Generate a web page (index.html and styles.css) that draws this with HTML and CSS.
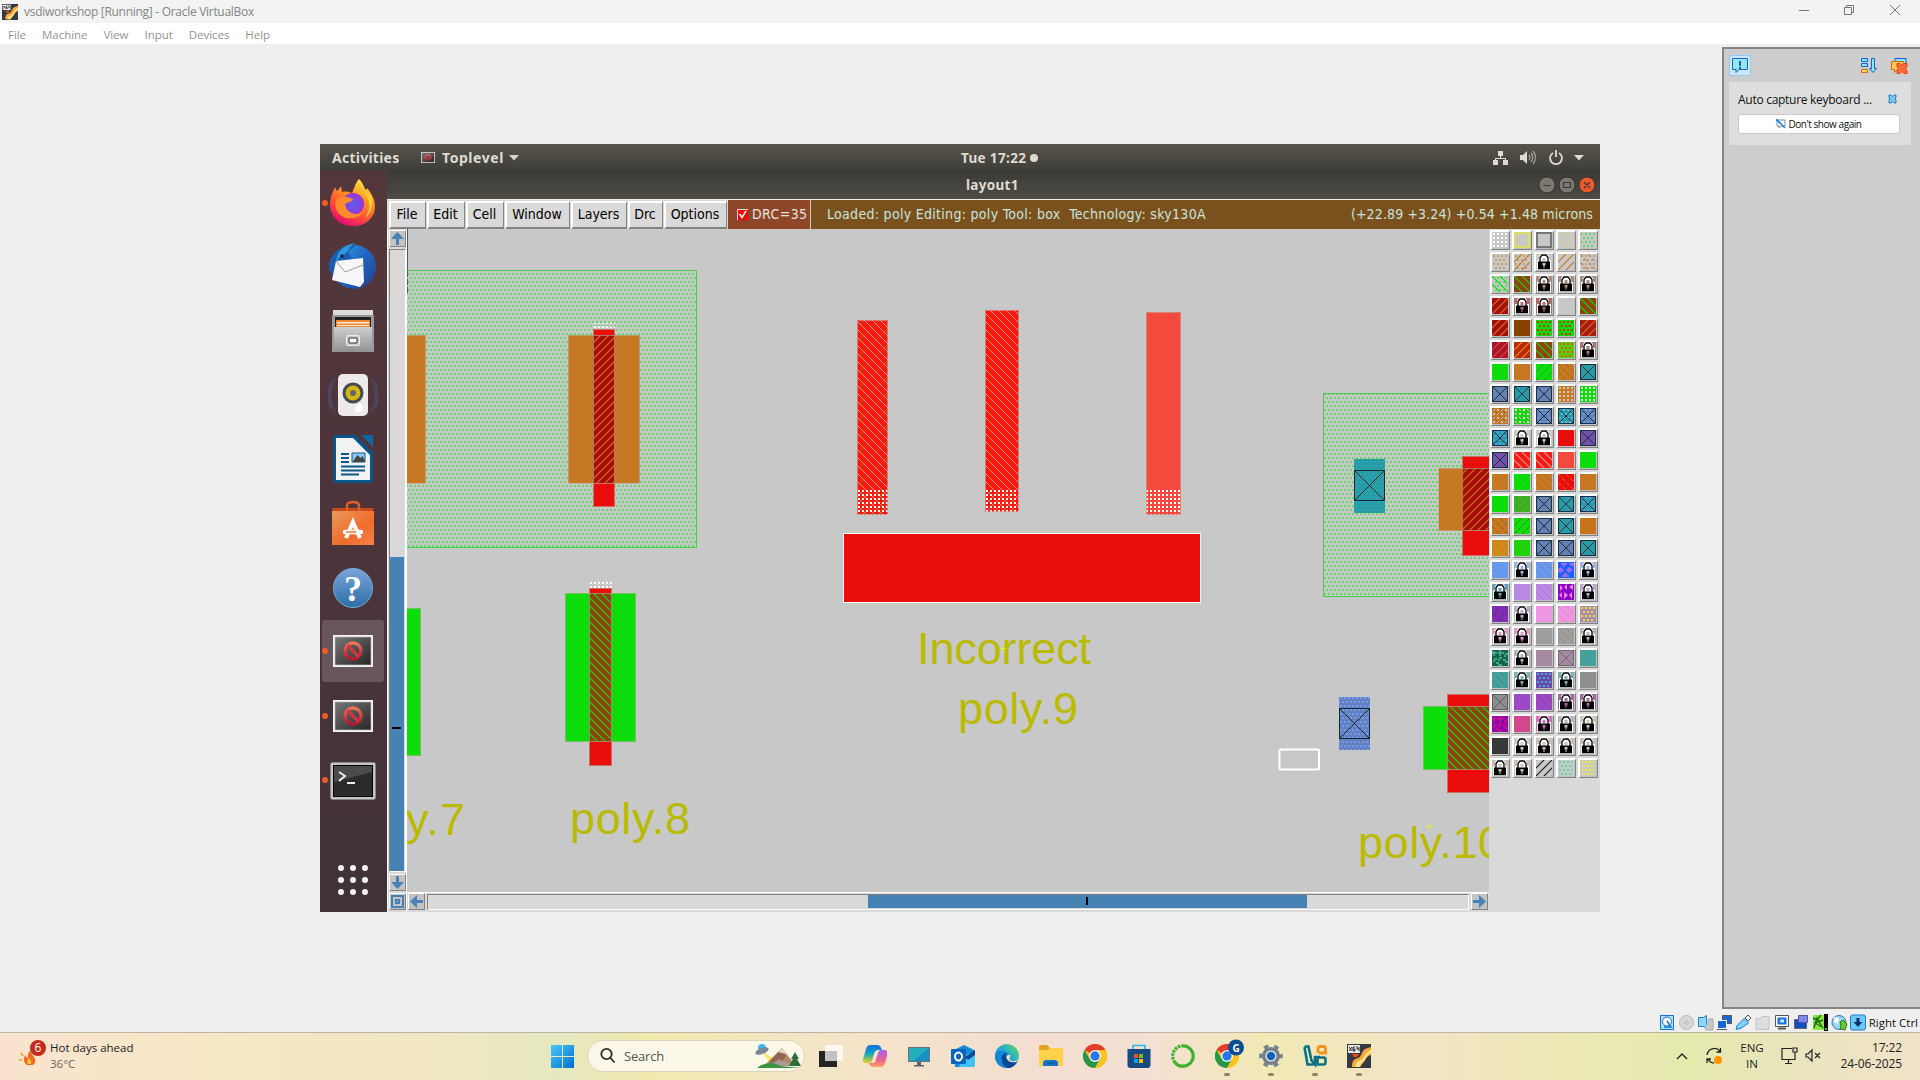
FILE: index.html
```html
<!DOCTYPE html>
<html lang="en">
<head>
<meta charset="utf-8">
<title>vsdiworkshop [Running] - Oracle VirtualBox</title>
<link rel="stylesheet" href="styles.css">
</head>
<body>
<svg class="defs" width="0" height="0" aria-hidden="true">
  <defs>
    <linearGradient id="gFox" x1="0.8" y1="0" x2="0.3" y2="1"><stop offset="0" stop-color="#fff44f"/><stop offset=".35" stop-color="#ff9a1f"/><stop offset=".7" stop-color="#ff4a3a"/><stop offset="1" stop-color="#e0067a"/></linearGradient>
    <radialGradient id="gOrb"><stop offset="0" stop-color="#5b5ff0"/><stop offset="1" stop-color="#9a35d6"/></radialGradient>
    <linearGradient id="gBird" x1="0" y1="0" x2="1" y2="1"><stop offset="0" stop-color="#3aa6e8"/><stop offset=".5" stop-color="#1d66c2"/><stop offset="1" stop-color="#263c8c"/></linearGradient>
    <linearGradient id="gSteel" x1="0" y1="0" x2="0" y2="1"><stop offset="0" stop-color="#cfcfcf"/><stop offset="1" stop-color="#919191"/></linearGradient>
    <linearGradient id="gBag" x1="0" y1="0" x2="1" y2="1"><stop offset="0" stop-color="#e8995a"/><stop offset=".6" stop-color="#f06c2c"/><stop offset="1" stop-color="#f5814a"/></linearGradient>
    <linearGradient id="gHelp" x1="0" y1="0" x2="0" y2="1"><stop offset="0" stop-color="#7ba3dc"/><stop offset="1" stop-color="#2b6fa5"/></linearGradient>
    <linearGradient id="gDark" x1="0" y1="0" x2="1" y2="1"><stop offset="0" stop-color="#777"/><stop offset="1" stop-color="#262626"/></linearGradient>
    <linearGradient id="gNo" x1="0" y1="0" x2="0" y2="1"><stop offset="0" stop-color="#ef7259"/><stop offset="1" stop-color="#b3152f"/></linearGradient>
    <linearGradient id="gWin" x1="0" y1="0" x2="1" y2="1"><stop offset="0" stop-color="#4cc8fb"/><stop offset="1" stop-color="#0070cf"/></linearGradient>
    <linearGradient id="gEdge" x1="0" y1="1" x2="1" y2="0"><stop offset="0" stop-color="#0f5fb8"/><stop offset=".5" stop-color="#22a5dc"/><stop offset="1" stop-color="#66e05a"/></linearGradient>
    <linearGradient id="gCopA" x1="0" y1="0" x2="0" y2="1"><stop offset="0" stop-color="#0b6fe8"/><stop offset=".5" stop-color="#19a7b8"/><stop offset="1" stop-color="#e9d51c"/></linearGradient>
    <linearGradient id="gCopB" x1="0" y1="0" x2="0" y2="1"><stop offset="0" stop-color="#a561f0"/><stop offset=".6" stop-color="#f0608e"/><stop offset="1" stop-color="#ffa45b"/></linearGradient>
    <pattern id="pWell" width="4" height="8" patternUnits="userSpaceOnUse"><path d="M0 1h2v2H0zM2 5h2v2H2z" fill="#5fd866"/></pattern>
    <pattern id="pDots" width="4" height="4" patternUnits="userSpaceOnUse"><path d="M2 2h2v2H2z" fill="#fff"/></pattern>
    <pattern id="pBlue" width="4" height="8" patternUnits="userSpaceOnUse"><path d="M0 1h2v2H0zM2 5h2v2H2z" fill="#6a9cf4"/></pattern>
    <pattern id="pTeal" width="4" height="8" patternUnits="userSpaceOnUse"><path d="M0 1h2v2H0zM2 5h2v2H2z" fill="#2aa2bc"/></pattern>
    <pattern id="pOrange" width="8" height="8" patternUnits="userSpaceOnUse"><path d="M-1 9L9 -1M-1 1L1 -1M7 9L9 7" stroke="#c87820" stroke-width="1.2"/></pattern>
    <pattern id="pGreen" width="8" height="8" patternUnits="userSpaceOnUse"><path d="M-1 -1L9 9M7 -1L9 1M-1 7L1 9" stroke="#0be00b" stroke-width="1.2"/></pattern>
    <pattern id="pPink" width="8" height="8" patternUnits="userSpaceOnUse"><path d="M-1 -1L9 9M7 -1L9 1M-1 7L1 9" stroke="#c99aa8" stroke-width=".95"/></pattern>
    <pattern id="pRust" width="16" height="16" patternUnits="userSpaceOnUse"><path d="M0 16L16 0" stroke="#c84a08" stroke-width="1"/></pattern>
    <symbol id="iChrome" viewBox="0 0 24 24"><circle cx="12" cy="12" r="12" fill="#fcc31e"/><path d="M12 12L1.6 6A12 12 0 0 1 22.4 6z" fill="#e33b2e"/><path d="M1.6 6A12 12 0 0 0 12 24L17.2 15 12 12 6.8 15z" fill="#24964a"/><path d="M12 6h10.4A12 12 0 0 1 12 24L17.2 15z" fill="#fcc31e"/><circle cx="12" cy="12" r="5.9" fill="#fff"/><circle cx="12" cy="12" r="4.7" fill="#2a78ea"/></symbol>
    <symbol id="iVm" viewBox="0 0 24 24"><rect width="24" height="24" fill="#353944"/><path d="M5 23c0-5 1-8 6-9 4-1 3-6 7-9l6-2v8c-5 1-5 5-8 8l-3 4z" fill="#f9a83a"/><path d="M8 23c1-4 2-6 6-7 4-2 3-7 10-10v3c-5 2-5 7-8 9-2 2-3 3-3 5z" fill="#fde08a"/><path d="M5 10h7l-2 3H7z" fill="#e8500e"/><rect x="1" y="1" width="12" height="8" rx="1" fill="#eee"/><path d="M2 3l3 4M5 3L2 7M8 3H6v4h2V5H6M10 2v3h2M12 3v4" stroke="#222" fill="none"/></symbol>
    <symbol id="iNo" viewBox="0 0 40 32"><rect width="40" height="32" fill="#f4f4f4"/><rect x="2" y="2" width="36" height="28" fill="url(#gDark)" stroke="#b9b9b9" stroke-width=".7"/><circle cx="20" cy="16" r="8" fill="none" stroke="url(#gNo)" stroke-width="3.4"/><path d="M14.5 10.5l11 11" stroke="#cf3540" stroke-width="3.2"/></symbol>
    <symbol id="iUp" viewBox="0 0 13 13"><path d="M6.500 0L13 7H8v6H5V7H0z" fill="#4682b4"/></symbol>
  </defs>
</svg>

<header class="titlebar">
  <svg class="app-icon" width="16" height="20"><use href="#iVm" width="16" height="16" y="2"/></svg>
  <span class="app-title">vsdiworkshop [Running] - Oracle VirtualBox</span>
  <svg class="caption" width="102" height="12" fill="none" stroke="#777"><path d="M0 6.500h10M45.500 3.500h7v7h-7zM47.500 3V1.500h7v7H53M91 1l10 10M101 1L91 11"/></svg>
</header>
<nav class="menubar"><span>File</span><span>Machine</span><span>View</span><span>Input</span><span>Devices</span><span>Help</span></nav>

<main class="stage">
  <section class="guest">
    <div class="topbar">
      <span class="activities">Activities</span>
      <svg class="tl-icon" width="14" height="11"><use href="#iNo" width="14" height="11"/></svg>
      <span class="toplevel">Toplevel</span>
      <svg width="10" height="6"><path d="M0 0h10L5 5.500z" fill="#d8d5cc"/></svg>
      <span class="clock">Tue 17:22<i></i></span>
      <svg class="tray" width="94" height="18" fill="#dfdbd2"><path d="M5 2h5v5H5zM0 11h5v5H0zM10 11h5v5h-5zM7 7h1v2h5v2h-1v-1H3v1H2V9h5zM27 6h3l4-4v13l-4-4h-3z"/><path d="M36 6q2 2.500 0 5M38 4q3.500 4.500 0 9M40 2q5 6.500 0 13" fill="none" stroke="#a5a299" stroke-width="1.300"/><path d="M60 4a6 6 0 1 0 6 0M63 1v7" fill="none" stroke="#dfdbd2" stroke-width="1.800"/><path d="M81 6h10l-5 5.500z"/></svg>
    </div>
    <div class="desk">
      <aside class="dock">
        <div class="slot s1"><b></b><svg width="48" height="48"><path d="M30 1c5 5 5 9 7 11 1-1 1-2 1-2 8 9 10 19 6 27-5 9-13 11-20 11C10 48 1 38 1 26 1 19 4 14 6 9c1 2 1 3 2 4 2-2 3-3 4-5l1 6c4-1 7 0 10 1 2-4 3-9 7-14z" fill="url(#gFox)"/><circle cx="24" cy="26" r="11" fill="url(#gOrb)"/><path d="M7 22c5-4 9-4 17-1-2 4-6 3-8 5 1 8 9 12 16 9 5-3 8-9 5-15 3 8-2 19-13 20C13 42 4 33 7 22z" fill="#ff8a2d"/><path d="M35 15c7 7 7 17 1 25 6-4 9-14 6-22z" fill="#ffcf3a"/></svg></div>
        <div class="slot s2"><svg width="50" height="50"><circle cx="26" cy="25" r="22" fill="url(#gBird)"/><path d="M1 22c2-8 6-13 14-17l14-3-9 8 8 14-18 14C4 34 0 29 1 22z" fill="#1a5cb4"/><path d="M8 19l27-3 1 24-4 5L4 38z" fill="#f7f7f9"/><path d="M8 19l9 11 18-7" fill="none" stroke="#999"/><path d="M8 20C9 8 16 3 27 1 20 5 21 12 12 15z" fill="#2f98d8"/><circle cx="14" cy="14" r="1.800" fill="#123"/></svg></div>
        <div class="slot s3"><svg width="44" height="46"><path d="M2 2h40v6H2z" fill="#dcdcdc"/><path d="M1 7h42v37H1z" fill="#999"/><path d="M4 9h36v12H4z" fill="#222"/><path d="M5 12h34v9H5z" fill="#ef8530"/><path d="M6 14h32v1.500H6zM6 17h32v1H6z" fill="#ffe9cf"/><path d="M3 19h38v25H3z" fill="url(#gSteel)"/><rect x="15.500" y="27.500" width="13" height="10" rx="1" fill="#ccc" stroke="#eee"/><path d="M18 30h8v5h-8z" fill="#fff" stroke="#333"/></svg></div>
        <div class="slot s4"><svg width="50" height="46"><path d="M7 6q-9 17 0 34M43 6q9 17 0 34M3 9q-5 14 0 28M47 9q5 14 0 28" fill="none" stroke="#4b5070" stroke-width="1.200"/><rect x="10" y="2" width="30" height="42" rx="5" fill="#ecebea"/><circle cx="25" cy="21" r="10.500" fill="#444a4d"/><circle cx="25" cy="21" r="7.500" fill="#d5b50f"/><circle cx="25" cy="21" r="3" fill="#666"/><circle cx="31" cy="36" r="4" fill="#fff"/></svg></div>
        <div class="slot s5"><svg width="42" height="50"><path d="M4 1h19l18 18v27a3 3 0 0 1-3 3H4a3 3 0 0 1-3-3V4a3 3 0 0 1 3-3z" fill="#06568c"/><path d="M29 1h12v12z" fill="#0e68a6"/><path d="M4 4h17l17 17v25H4z" fill="#f2f2f2"/><path d="M9 20h8M9 24h8M9 28h8M9 32.500h24M9 36.500h24M9 40.500h18" stroke="#0c5889" stroke-width="2"/><path d="M20 19h13v9H20z" fill="#8cc9f2" stroke="#0c5889"/><path d="M20.500 28l5-7 3 3 2-2 2.500 5v1z" fill="#444"/></svg></div>
        <div class="slot s6"><svg width="44" height="46"><path d="M1 8h42l-2 4H2z" fill="#ca4a1c"/><path d="M16 15V6q0-4 6-4t6 4v9" fill="none" stroke="#e25a24" stroke-width="2.600"/><path d="M1 11h42v34H1z" fill="url(#gBag)"/><path d="M15 38l7-16 7 16" fill="none" stroke="#fff" stroke-width="4"/><path d="M14 32h16" stroke="#fff" stroke-width="4.500" stroke-linecap="round"/><path d="M15 32h10" stroke="#f06c2c" stroke-width="1.400"/></svg></div>
        <div class="slot s7"><svg width="42" height="42"><circle cx="21" cy="21" r="19.500" fill="url(#gHelp)" stroke="#78add4"/><text x="21" y="34" text-anchor="middle" class="helpmark">?</text></svg></div>
        <div class="slot s8 active"><b></b><svg width="40" height="32"><use href="#iNo" width="40" height="32"/></svg></div>
        <div class="slot s9"><b></b><svg width="40" height="32"><use href="#iNo" width="40" height="32"/></svg></div>
        <div class="slot s10"><b></b><svg width="46" height="38"><rect x=".5" y=".5" width="45" height="37" rx="2" fill="#c5c5c5" stroke="#888"/><rect x="3.500" y="3.500" width="39" height="31" fill="#2b2b2b" stroke="#000"/><path d="M4 4h38v6L4 20z" fill="#4b4b4b"/><path d="M9 10l6 4-6 5M17 21h8" fill="none" stroke="#eee" stroke-width="2"/></svg></div>
        <div class="slot s11"><svg width="32" height="32" fill="#f2f2f2"><circle cx="4" cy="4" r="3"/><circle cx="16" cy="4" r="3"/><circle cx="28" cy="4" r="3"/><circle cx="4" cy="16" r="3"/><circle cx="16" cy="16" r="3"/><circle cx="28" cy="16" r="3"/><circle cx="4" cy="28" r="3"/><circle cx="16" cy="28" r="3"/><circle cx="28" cy="28" r="3"/></svg></div>
      </aside>
      <div class="magic">
        <div class="wintitle"><span>layout1</span>
          <svg width="56" height="18"><circle cx="8" cy="9" r="8" fill="#7d7a72" stroke="#33322d"/><circle cx="28" cy="9" r="8" fill="#7d7a72" stroke="#33322d"/><circle cx="48" cy="9" r="8" fill="#ec5a2c" stroke="#33322d"/><path d="M4.500 9.500h7M24.500 6.500h7v5h-7zM45 6l6 6M51 6l-6 6" fill="none" stroke="#3a3935" stroke-width="1.200"/></svg>
        </div>
        <div class="tools">
          <button class="w37">File</button><button class="w38">Edit</button><button class="w38">Cell</button><button class="w65">Window</button><button class="w56">Layers</button><button class="w35">Drc</button><button class="w63">Options</button>
          <div class="drc"><svg width="11" height="11"><path d="M0 0h11v11H0z" fill="#f00"/><path d="M.5 11V.5H11" fill="none" stroke="#ddd"/><path d="M2.500 5l2.500 3.500L9 2" fill="none" stroke="#fff" stroke-width="1.600"/></svg><span>DRC=35</span></div>
          <div class="status"><span class="loaded">Loaded: poly Editing: poly Tool: box&nbsp; Technology: sky130A</span><span class="coords">(+22.89 +3.24) +0.54 +1.48 microns</span></div>
        </div>
        <div class="work">
          <div class="vscroll">
            <div class="arrow"><svg width="13" height="13"><use href="#iUp" width="13" height="13"/></svg></div>
            <div class="vtrough"><div class="vthumb"></div></div>
            <div class="arrow"><svg class="down" width="13" height="13"><use href="#iUp" width="13" height="13"/></svg></div>
            <div class="arrow"><svg width="13" height="13" fill="none" stroke="#4682b4" stroke-width="2"><path d="M1 1h11v11H1zM5 5h3v3H5z"/></svg></div>
          </div>
          <div class="viewcol">
            <svg class="canvas" width="1082" height="663" viewBox="407 229 1082 663">
              <path d="M407.500 229v64" stroke="#555"/>
              <rect x="400" y="270.500" width="296.500" height="277" fill="url(#pWell)" stroke="#45cf4b" shape-rendering="crispEdges"/>
              <g shape-rendering="crispEdges">
                <path d="M407 335h19v148h-19zM568 335h72v148h-72z" fill="#c67922"/>
                <path d="M594 323h21v6h-21z" fill="url(#pDots)"/>
                <path d="M593 329h22v178h-22z" fill="#ea0d0b"/>
                <path d="M593 335h22v148h-22z" fill="#a80c0b"/>
              </g>
              <path d="M594 336h20v147h-20z" fill="url(#pOrange)"/>
              <g fill="none" stroke="#b8aa92" stroke-opacity=".65"><path d="M407 335.500h18.500v148H407M568.500 335.500h71v148h-71zM593.500 329.500h21v177h-21z"/></g>
              <g shape-rendering="crispEdges">
                <path d="M407 608h14v148h-14zM565 593h71v149h-71z" fill="#0cde0c"/>
                <path d="M590 582h22v6h-22z" fill="url(#pDots)"/>
                <path d="M589 588h23v178h-23z" fill="#ea0d0b"/>
                <path d="M589 593h23v149h-23z" fill="#8f420f"/>
              </g>
              <path d="M590 594h21v147h-21z" fill="url(#pGreen)"/>
              <path d="M407 608.500h13.500v147H407M565.500 593.500h70v148h-70zM589.500 588.500h22v177h-22z" fill="none" stroke="#b8aa92" stroke-opacity=".65"/>
              <g shape-rendering="crispEdges">
                <path d="M857 320h31v195h-31zM985 310h34v202h-34z" fill="#fc180a"/>
                <path d="M1146 312h35v203h-35z" fill="#f4493d"/>
              </g>
              <path d="M857 320h31v195h-31z" fill="url(#pRust)"/>
              <path d="M857 320h31v195h-31zM985 310h34v202h-34z" fill="url(#pPink)"/>
              <path d="M857 490h31v25h-31zM985 490h34v22h-34zM1146 490h35v25h-35z" fill="url(#pDots)" shape-rendering="crispEdges"/>
              <path d="M857.500 320.500h30v194h-30zM985.500 310.500h33v201h-33zM1146.500 312.500h34v202h-34z" fill="none" stroke="#c99c96" stroke-opacity=".7"/>
              <rect x="843.500" y="533.500" width="357" height="69" fill="#ea0d0b" stroke="#fff"/>
              <rect x="1323.500" y="393.500" width="180" height="203" fill="url(#pWell)" stroke="#45cf4b" shape-rendering="crispEdges"/>
              <g shape-rendering="crispEdges">
                <path d="M1354 459h31v54h-31z" fill="#279da3"/><path d="M1354 459h31v54h-31z" fill="url(#pTeal)"/>
                <path d="M1439 468h50v63h-50z" fill="#c67922"/>
                <path d="M1462 456h27v100h-27z" fill="#ea0d0b"/>
                <path d="M1462 468h27v63h-27z" fill="#a80c0b"/>
                <path d="M1339 697h31v53h-31z" fill="#6680bd"/><path d="M1339 697h31v53h-31z" fill="url(#pBlue)"/>
                <path d="M1423 706h66v64h-66z" fill="#0cde0c"/>
                <path d="M1447 694h42v99h-42z" fill="#ea0d0b"/>
                <path d="M1447 706h42v64h-42z" fill="#8f420f"/>
              </g>
              <path d="M1463 469h27v62h-27z" fill="url(#pOrange)"/>
              <path d="M1448 707h42v62h-42z" fill="url(#pGreen)"/>
              <path d="M1490 468.500h-51.500v62h52M1490 456.500h-27.500v99h28M1490 706.500h-66.500v63h67M1490 694.500h-42.500v98h43" fill="none" stroke="#b8aa92" stroke-opacity=".65"/>
              <path d="M1354.500 470.500h30v30h-30zl30 30M1384.500 470.500l-30 30M1339.500 708.500h30v30h-30zl30 30M1369.500 708.500l-30 30" fill="none" stroke="#14282d"/>
              <rect x="1279.500" y="749.500" width="39.500" height="20" rx="1" fill="none" stroke="#fff" stroke-width="2"/>
              <g class="label">
                <text x="406" y="835" textLength="59">y.7</text>
                <text x="570" y="833.500" textLength="120">poly.8</text>
                <text x="917" y="664" textLength="174">Incorrect</text>
                <text x="958" y="723.500" textLength="120">poly.9</text>
                <text x="1358" y="857.500" textLength="145">poly.10</text>
              </g>
              <path d="M1000 648.500h6M1003.500 646v6M1018.500 705v4M629.500 815v4M1426 826.500h6M1429.500 824v6" stroke="#eaea30"/>
            </svg>
            <div class="hscroll">
              <div class="arrow"><svg class="left" width="13" height="13"><use href="#iUp" width="13" height="13"/></svg></div>
              <div class="htrough"><div class="hthumb"></div></div>
              <div class="arrow"><svg class="right" width="13" height="13"><use href="#iUp" width="13" height="13"/></svg></div>
            </div>
          </div>
          <div class="palette" id="palette"></div>
        </div>
      </div>
    </div>
  </section>

  <aside class="notes">
    <div class="notes-head">
      <span class="bubble"><svg width="16" height="17"><path d="M.5 1.500h15v11H7l-3 3v-3H.5z" fill="#8fe6ff" stroke="#1465c8"/><path d="M8 4v5M8 10v2" stroke="#001" stroke-width="1.200"/></svg></span>
      <svg class="nh-icons" width="47" height="17"><path d="M.5 1.500h6v3h-6zM.5 6.500h6v3h-6z" fill="#8fe2ff" stroke="#1465c8"/><path d="M.5 12.500h6v3h-6z" fill="#ffd75a" stroke="#d86a10"/><path d="M10.500 1.500h3v10h2l-3.500 4-3.500-4h2z" fill="#8fe2ff" stroke="#1465c8"/><path d="M34 1.500h11v8H34z" fill="#8fe2ff" stroke="#1465c8"/><path d="M30.500 4.500h12v8h-6l-3 3v-3h-3z" fill="#ffc94a" stroke="#d86a10"/><path d="M36 6.500h3l2 2 2-2h3v3l-1.500 2 1.500 2v3h-3l-2-2-2 2h-3v-3l1.500-2-1.500-2z" fill="#ff6a3a" stroke="#e23b10"/></svg>
    </div>
    <div class="note">
      <div class="note-title"><span>Auto capture keyboard ...</span><svg width="9" height="10"><path d="M1 1h2l1.500 1.500L6 1h2v3L7 5l1 1v3H6L4.500 7.500 3 9H1V6l1-1-1-1z" fill="#78c8f6" stroke="#2a7fc6"/></svg></div>
      <div class="note-btn"><svg width="10" height="10"><path d="M1 1h8v6H5L3 9V7H1z" fill="#fff" stroke="#7a8d9a"/><path d="M0 0l9 9" stroke="#1a87d6" stroke-width="1.600"/></svg><span>Don't show again</span></div>
    </div>
  </aside>

  <footer class="vbstatus">
    <svg width="206" height="17">
      <path d="M.5 1.500h13v14H.5z" fill="#a4e4ff" stroke="#1b6fd0"/><circle cx="7" cy="7.500" r="4.500" fill="#fff" stroke="#1b6fd0"/><path d="M7 7l4 6H4" fill="none" stroke="#1b6fd0" stroke-width="1.500"/>
      <circle cx="26.500" cy="8.500" r="7" fill="#d6d6d6" stroke="#b9b9b9"/><circle cx="26.500" cy="8.500" r="1.500" fill="#eee" stroke="#aaa"/>
      <path d="M38.500 3.500h5l3-2v13l-3-2h-5z" fill="#8ed8ff" stroke="#1b7fd0"/><path d="M48 5h5v11h-8" fill="#c3c7ca" stroke="#aaa"/>
      <path d="M62.500 1.500h9v8h-9z" fill="#1769d2" stroke="#555"/><path d="M57.500 6.500h9v8h-9z" fill="#1769d2" stroke="#fff"/><path d="M57 15.500h10" stroke="#555"/>
      <path d="M76 15.500l1-4 7-7 4.500 4.500-7 5z" fill="#7cd2ff" stroke="#1b7fd0"/><path d="M85 4l3-3 3 3-3 3z" fill="#eee" stroke="#555"/>
      <path d="M96 4.500h5l1-2h7v13H96z" fill="#dedede" stroke="#c3c3c3"/>
      <path d="M115.500 1.500h13v11h-13z" fill="#fff" stroke="#555"/><path d="M117.500 3.500h9v7h-9z" fill="#1b6fe0"/><path d="M120 5.500h4v3h-4z" fill="#bfe4ff"/><path d="M118 14.500h8" stroke="#555" stroke-width="2"/>
      <path d="M134.500 5.500h12v9h-12z" fill="#0f4fc0" stroke="#666"/><path d="M138.500 1.500h9v7h-9z" fill="#7f86ec" stroke="#5055a8"/>
      <path d="M153 1h11v15h-11z" fill="#8be83c"/><path d="M154 14l3-10 5 9-7-4 8-3M153 4l4 2 4-5" fill="none" stroke="#1d6b12" stroke-width="1.400"/><path d="M164 0h4v17h-4z" fill="#000"/><path d="M165 14h2v2h-2z" fill="#0d0"/>
      <circle cx="179" cy="8.500" r="7" fill="#9bd7fb" stroke="#2f78bd"/><path d="M174 3l5 1-1 6-4-2z" fill="#fff"/><path d="M180 8l3-2 4 4-2 6-5-1 1-3z" fill="#64c832" stroke="#2b7a1b"/>
      <rect x="190.500" y="1" width="15" height="15" rx="2" fill="#6cc7fb" stroke="#1b7fd0"/><path d="M196.500 4h3v4h3l-4.500 5-4.500-5h3z" fill="#06326e"/>
    </svg>
    <span>Right Ctrl</span>
  </footer>
</main>

<footer class="taskbar">
  <div class="weather">
    <svg width="30" height="32"><path d="M8 25q-5-3-2-10 1 3 3 3-1-5 3-8 0 4 3 7 3 5-1 8z" fill="#f26a21"/><path d="M9 24q-2-3 1-6 3 3 2 6z" fill="#ffc83d"/><path d="M2 13l2 3M0 20h3" stroke="#f2a01f" stroke-width="1.500"/><circle cx="19" cy="8" r="8" fill="#c42b1c"/><text x="19" y="12" text-anchor="middle" class="badge">6</text></svg>
    <div><p>Hot days ahead</p><p class="dim">36°C</p></div>
  </div>
  <div class="apps">
    <svg class="start" width="24" height="24" fill="url(#gWin)"><path d="M0 1h11v11H0zM12 1h11v11H12zM0 13h11v11H0zM12 13h11v11H12z"/></svg>
    <div class="search">
      <svg width="16" height="17" fill="none" stroke="#2b2b2b" stroke-width="1.800"><circle cx="6.500" cy="7" r="5.200"/><path d="M10.500 11l4 4.500"/></svg>
      <span>Search</span>
      <svg class="doodle" width="48" height="26"><path d="M7 8l7 11 5-3z" fill="#ffe36a"/><path d="M10 22L27 5l13 17z" fill="#b5886c"/><path d="M14 19L27 5l4 8-4 5-3-3-4 6z" fill="#8f6752"/><path d="M23 9l4-4 4 6-4-1z" fill="#ecd9cc"/><path d="M14 23q8-8 17-4l8 4z" fill="#a99c96"/><path d="M2 25q12-9 24-2l20 2z" fill="#3d9440"/><path d="M40 9l4 7h-2l4 7H34l4-7h-2z" fill="#2c6e3b"/><circle cx="7" cy="5" r="4" fill="#3eb4e8"/><ellipse cx="7" cy="8" rx="7" ry="3" transform="rotate(-20 7 8)" fill="#7d8590"/></svg>
    </div>
    <svg class="ic" width="24" height="24"><path d="M0 7h18v16H0z" fill="#242424"/><path d="M6 1h18v16H6z" fill="#fff" fill-opacity=".72"/></svg>
    <svg class="ic" width="24" height="24"><path d="M7 1h7c3 0 4 2 5 5h-4c-2 0-3 1-4 4l-2 7c-1 2-2 2-4 2H3c-3 0-4-3-2-7l2-7c1-3 2-4 4-4z" fill="url(#gCopA)"/><path d="M17 23h-6c-3 0-4-1-5-4h4c2 0 3-2 3-4l2-6c1-3 2-3 4-3h2c3 0 4 2 3 6l-2 7c-1 3-2 4-5 4z" fill="url(#gCopB)"/></svg>
    <svg class="ic" width="24" height="24"><path d="M1 3h22v15H1z" fill="#69737b"/><path d="M2 4h20v13H2z" fill="#22aebd"/><path d="M22 4v13H6z" fill="#178fc6"/><path d="M10 18h4v3h3v1.500H7V21h3z" fill="#59636b"/></svg>
    <svg class="ic" width="24" height="24"><path d="M3 6l10-5 10 5v17H4z" fill="#1689d8"/><path d="M12 12l12-5v14a2 2 0 0 1-2 2H8z" fill="#41c3f3"/><path d="M14 13l10-7v5l-7 5z" fill="#0b4692"/><rect y="5" width="15" height="15" rx="1" fill="#0a64bd"/><ellipse cx="7.500" cy="12.500" rx="3.500" ry="4" fill="none" stroke="#fff" stroke-width="2"/></svg>
    <svg class="ic" width="24" height="24"><circle cx="12" cy="12" r="12" fill="url(#gEdge)"/><path d="M0 12c1-4 5-6 9-5 3 1 5 3 5 5-4-2-8 1-7 6 1 3 3 5 6 6C5 24 0 19 0 12z" fill="#1487d8"/><path d="M7 16c-1-4 1-7 5-7-2 3-1 7 3 8 3 1 5 0 8-1-3 6-6 8-10 8-3-1-6-4-6-8z" fill="#0c4a94"/><path d="M12 12c1-2 4-1 3 1-1 1-1 3 2 4 3 1 6-1 7-3-1 4-5 5-8 4-4-1-5-4-4-6z" fill="#f0e4cc"/></svg>
    <svg class="ic" width="24" height="24"><path d="M0 3a2 2 0 0 1 2-2h6l3 3h11a2 2 0 0 1 2 2v16H0z" fill="#e3a31a"/><path d="M0 6h9l2-2h13v18H0z" fill="#ffd04a"/><path d="M4 22v-4l2-2h11l2 2v4z" fill="#1673c5"/><path d="M8 19h8" stroke="#0b4d91"/></svg>
    <svg class="ic" width="24" height="24"><use href="#iChrome" width="24" height="24"/></svg>
    <svg class="ic" width="24" height="24"><path d="M6 6V1.500h12V6" fill="none" stroke="#2fb3ee" stroke-width="1.700"/><path d="M.5 5h23v16a3 3 0 0 1-3 3h-17a3 3 0 0 1-3-3z" fill="#164a80"/><path d="M7 10h4v4H7z" fill="#f25022"/><path d="M12 10h4v4h-4z" fill="#7fba00"/><path d="M7 15h4v4H7z" fill="#00a4ef"/><path d="M12 15h4v4h-4z" fill="#ffb900"/></svg>
    <svg class="ic" width="24" height="24" fill="none"><path d="M12 1.800a10.200 10.200 0 1 1-8 16.600" stroke="#3eb02b" stroke-width="3.200"/><path d="M4 18.400A10.200 10.200 0 0 1 12 1.800" stroke="#3eb02b" stroke-width="3.200" stroke-dasharray="2.500 1"/></svg>
    <div class="ic run"><svg class="wide" width="30" height="30"><use href="#iChrome" y="5" width="24" height="24"/><circle cx="21" cy="8.500" r="8" fill="#0a4d91"/><text x="21" y="12.500" text-anchor="middle" class="gbadge">G</text></svg></div>
    <div class="ic run"><svg width="24" height="24"><circle cx="12" cy="12" r="9.700" fill="none" stroke="#79838c" stroke-width="4.300" stroke-dasharray="4.400 5.757" stroke-dashoffset="2.200"/><circle cx="12" cy="12" r="7.300" fill="#edf0f2" stroke="#74808a" stroke-width="3.600"/><circle cx="12" cy="12" r="4.200" fill="#1261b5"/></svg></div>
    <div class="ic run"><svg width="24" height="24" fill="none"><path d="M1.500 2.500h4l3 14 3.500 4V13h5" stroke="#0b7285" stroke-width="2.600"/><path d="M1.500 3l3 17.500h5l5-5v5h6q2 0 2-2v-3q0-2-2-2h-7" stroke="#0b7285" stroke-width="2.600"/><path d="M15 9V4.500q0-2 2-2h3.500q2 0 2 2V9H16" stroke="#f3921e" stroke-width="2.800"/></svg></div>
    <div class="ic run"><svg width="24" height="24"><use href="#iVm" width="24" height="24"/></svg></div>
  </div>
  <div class="systray">
    <svg class="chev" width="12" height="8" fill="none" stroke="#222" stroke-width="1.400"><path d="M1 7l5-5 5 5"/></svg>
    <svg class="upd" width="18" height="18" fill="none" stroke="#222" stroke-width="1.300"><path d="M1 8a7.500 7.500 0 0 1 13-4M14.500 1v4h-4M1 16v-4h4M2 12q2 4 6 4"/><circle cx="12" cy="13" r="4" fill="#ff9500" stroke="none"/></svg>
    <div class="lang"><p>ENG</p><p>IN</p></div>
    <svg class="net" width="40" height="18" fill="none" stroke="#222" stroke-width="1.200"><path d="M11 1.500H1v11h13V8M4 16.500h7M7.500 13v3M12 1h4v4h-4zM14 5v3M25 7h2l4-4v11l-4-4h-2zM34 6l5 5M39 6l-5 5"/></svg>
    <div class="time"><p>17:22</p><p>24-06-2025</p></div>
  </div>
</footer>
<script src="palette.js"></script>
</body>
</html>
```
FILE: styles.css
```css
* { box-sizing: border-box; }
body { margin: 0; width: 1920px; height: 1080px; overflow: hidden; display: flex; flex-direction: column; background: #efefef; font-family: "Open Sans", "Noto Sans", sans-serif; font-size: 12px; color: #111; }
p { margin: 0; }
svg { display: block; flex: none; }
span { white-space: nowrap; }
.defs { position: absolute; }

/* host window */
.titlebar { height: 23px; flex: none; background: #f3f3f3; display: flex; align-items: center; padding-left: 2px; color: #858585; }
.app-title { margin-left: 6px; font-size: 12px; letter-spacing: -0.29px; }
.caption { margin: 0 19px 3px auto; }
.menubar { height: 21px; flex: none; background: #fff; display: flex; align-items: center; gap: 16px; padding: 1px 0 0 8px; color: #949494; font-size: 11.500px; letter-spacing: -.04px; }
.stage { position: relative; flex: none; height: 988px; display: flex; flex-direction: column; align-items: center; padding-top: 100px; }

/* guest desktop */
.guest { width: 1280px; height: 768px; flex: none; display: flex; flex-direction: column; }
.topbar { position: relative; height: 27px; flex: none; display: flex; align-items: center; padding: 0 14px 0 12px; background: linear-gradient(#57544b, #3e3d38); color: #dfdbd2; font: bold 14px "Noto Sans", "Open Sans", sans-serif; }
.activities { width: 89px; letter-spacing: .25px; }
.tl-icon { margin-right: 7px; }
.toplevel { width: 67px; letter-spacing: .55px; }
.clock { position: absolute; left: 641px; display: flex; align-items: center; gap: 4px; font-size: 13.500px; letter-spacing: .35px; }
.clock i { width: 8px; height: 8px; border-radius: 50%; background: #dfdbd2; }
.tray { margin-left: auto; margin-right: -1px; }
.desk { flex: 1; display: flex; min-height: 0; }
.dock { width: 67px; flex: none; background: linear-gradient(#54373b, #4a333a 60%, #3f3337); display: flex; flex-direction: column; padding-left: 2px; }
.slot { position: relative; width: 62px; flex: none; display: flex; align-items: center; justify-content: center; height: 64px; }
.slot b { position: absolute; left: 0; top: 50%; width: 6px; height: 6px; margin-top: -3px; border-radius: 50%; background: #f15a24; }
.slot.active { height: 62px; margin: 1px 0 2px; background: #68565c; border-radius: 3px; }
.s1 svg { margin-top: -2px; }
.s7 svg { margin-top: 2px; }
.s10 svg { margin-top: 2px; }
.s11 { margin-top: 36px; }
.helpmark { font: bold 36px "Liberation Serif", serif; fill: #fff; }

.magic { flex: 1; display: flex; flex-direction: column; min-width: 0; background: #d9d9d9; }
.wintitle { height: 28px; flex: none; display: flex; align-items: center; background: linear-gradient(#3b3a36, #4d4b44); color: #dfdbd2; font: bold 13.500px "Noto Sans", sans-serif; letter-spacing: .3px; padding-left: 579px; padding-right: 5px; justify-content: space-between; }
.tools { height: 30px; flex: none; display: flex; border-top: 1px solid #eee; padding-left: 2px; font-family: "DejaVu Sans Condensed", "DejaVu Sans", sans-serif; font-stretch: condensed; }
.tools button { flex: none; margin: 1px 1px 0 0; padding: 0 2px 2px 0; height: 28px; border: 2px solid; border-color: #fff #828282 #828282 #fff; border-right-width: 1px; background: #d9d9d9; color: #000; font: 14px "DejaVu Sans", sans-serif; font-stretch: condensed; }
.w37 { width: 37px; } .w38 { width: 38px; } .w65 { width: 65px; } .w56 { width: 56px; } .w35 { width: 35px; } .w63 { width: 63px; }
.drc { width: 83px; flex: none; background: #8f4527; color: #e6e3e0; border-right: 1px solid #d5c8b8; display: flex; align-items: center; gap: 4px; padding: 0 0 1px 9px; font-size: 14px; letter-spacing: .4px; }
.status { flex: 1; background: #7a511d; color: #c9e4de; display: flex; align-items: center; justify-content: space-between; padding: 0 7px 1px 16px; font-size: 14px; }
.loaded { letter-spacing: .3px; }
.coords { letter-spacing: .12px; }
.work { flex: 1; display: flex; min-height: 0; }
.vscroll { width: 20px; flex: none; display: flex; flex-direction: column; align-items: center; padding: 1px 0 2px 1px; gap: 2px; border-left: 1px solid #fff; border-right: 1px solid #fff; }
.arrow { width: 17px; height: 17px; flex: none; padding: 1px; border: 1px solid; border-color: #fff #828282 #828282 #fff; background: #c3c3c3; }
.down { transform: rotate(180deg); }
.left { transform: rotate(-90deg); }
.right { transform: rotate(90deg); }
.vtrough { flex: 1; width: 17px; border: 1px solid; border-color: #828282 #fff #fff #828282; padding: 307px 1px 0 0; background: #d9d9d9; display: flex; }
.vthumb { flex: 1; background: linear-gradient(#000, #000) 2px 170px / 9px 2px no-repeat #4682b4; }
.viewcol { width: 1082px; flex: none; display: flex; flex-direction: column; }
.canvas { background: #c8c8c8; }
.label { font: 45px "Liberation Sans", Arial, sans-serif; fill: #baba00; }
.hscroll { height: 20px; display: flex; align-items: center; gap: 2px; padding: 0 1px 2px; border-top: 1px solid #fff; }
.htrough { flex: 1; height: 16px; border: 1px solid; border-color: #828282 #fff #fff #828282; display: flex; padding: 0 161px 1px 440px; }
.hthumb { flex: 1; background: linear-gradient(#000, #000) 218px 2px / 2px 8px no-repeat #4682b4; }
.palette { flex: 1; display: grid; grid-template-columns: repeat(5, 20px); grid-auto-rows: 20px; gap: 2px; padding: 1px; align-content: start; }
.cell { border: solid; border-width: 2px 1px 1px 2px; border-color: #fff #828282 #828282 #fff; background: #c0c0c0; }

/* notification centre */
.notes { position: absolute; left: 1722px; top: 3px; width: 202px; height: 962px; border: 2px solid #858585; background: #cdcdcd; padding: 5px; }
.notes-head { height: 22px; display: flex; align-items: center; justify-content: space-between; padding-right: 9px; }
.bubble { width: 22px; height: 21px; display: flex; align-items: center; justify-content: center; background: #cde6f8; border: 1px solid #90c8f6; border-radius: 2px; }
.note { margin-top: 6px; width: 182px; height: 63px; padding: 8px 10px 10px 9px; background: #dedede; }
.note-title { height: 18px; display: flex; align-items: center; justify-content: space-between; padding-right: 4px; font-size: 12px; letter-spacing: -.28px; }
.note-btn { margin-top: 6px; height: 20px; width: 162px; display: flex; align-items: center; justify-content: center; gap: 2px; background: #fff; border: 1px solid #ccc; border-radius: 3px; font-size: 10px; letter-spacing: -.45px; }
.vbstatus { position: absolute; right: 2px; bottom: 0; height: 20px; display: flex; align-items: center; gap: 3px; font-size: 11.500px; }

/* host taskbar */
.taskbar { height: 48px; flex: none; display: flex; align-items: center; padding-bottom: 2px; border-top: 1px solid #b9b6a6; background: linear-gradient(90deg, #f9e3cf, #f6e8c4 12%, #f1e7c3 22%, #e5e8bf 29%, #f0e9ae 34%, #f4e5c6 42%, #f3ded0 54%, #f3e0d2 60%, #f1e9b6 66%, #f2e4c4 74%, #ece8b4 82%, #e5eaae 88%, #eae4be 94%, #f0e3c8); }
.weather { width: 551px; flex: none; display: flex; align-items: center; gap: 1px; padding-left: 19px; font-size: 11.500px; line-height: 16px; color: #222; }
.dim { color: #666; }
.badge { font: 12px "Open Sans", sans-serif; fill: #fff; }
.gbadge { font: bold 10px "Open Sans", sans-serif; fill: #fff; }
.apps { display: flex; align-items: center; width: 840px; flex: none; }
.search { width: 218px; height: 32px; flex: none; margin: 0 13px 0 12px; border-radius: 16px; background: #fbf8ea; border: 1px solid #dcd6b8; display: flex; align-items: center; padding: 0 1px 0 12px; font-size: 13px; letter-spacing: -.2px; color: #555; gap: 8px; }
.doodle { margin-left: auto; }
.ic { position: relative; width: 24px; height: 24px; flex: none; margin-right: 20px; }
.search + .ic { margin-left: 1px; }
.run::after { content: ""; position: absolute; left: 9px; bottom: -8px; width: 6px; height: 3px; border-radius: 2px; background: #8b8570; }
.wide { position: absolute; left: 0; top: -5px; }
.systray { flex: 1; display: flex; align-items: center; padding: 1px 18px 0 285px; font-size: 12px; line-height: 16px; color: #222; }
.upd { margin-left: 18px; }
.lang { margin-left: 15px; width: 26px; text-align: center; font-size: 11.500px; }
.net { margin-left: 16px; }
.time { margin-left: auto; text-align: right; font-size: 12px; letter-spacing: -.1px; }
```
FILE: palette.js
```js
// Layer palette: each row lists five swatches as "base overlay:colour ...".
// d dots, s staggered dots, b backslash hatch, f slash hatch, p/q broken hatches, x contact, o inset frame, t/h texture, L lock
const G = '#c8c8c8', R = '#a80c0b', O = '#c67922', N = '#0cde0c', B = '#8f420f', U = '#6680b0', T = '#279da3';
const rows = [
  [`${G} d:#fff`, `${G} o:#dddd66`, `${G} o:#777`, `${G} p:#e8e83a`, `${G} s:#5fd866`],
  [`${G} s:#c99c68`, `${G} s:#c99c68 f:${O}`, `${G} p:#e0e04a L`, `${G} f:${O}`, `${G} s:#c99c68 p:#b87440`],
  [`${G} s:#5fd866 b:${N}`, `${B} b:${N}`, `#a98d80 L`, `#a98d80 L`, `#a98d80 L`],
  [`${R} f:${O}`, `#b8686c L`, `#b8686c L`, G, `${B} b:${N}`],
  [`${R} f:${O}`, '#864400', `${N} s:#e02a18`, `${N} s:#e02a18 q:#289018`, `#aa1810 f:${O}`],
  ['#aa1428 f:#dc4444', '#b62c08 f:#ee8a18', `${B} b:${N}`, '#4ed20c s:#ee5020', '#ad7771 L'],
  [N, O, `${N} q:#148818`, `${O} p:#8f5b1c`, `${T} x`],
  [`${U} x`, `${T} x`, `${U} x`, `${O} d:${G}`, `${N} d:#e4eede`],
  [`${O} d:${G} p:#885030`, `${N} d:#e4eede q:#b06a34`, `${U} s:#5c9cf4 x`, `${T} s:#48c4ee x`, `${U} s:#5c9cf4 x`],
  [`${T} s:#48a4ee x`, `${G} L`, `${G} L`, '#ea0d0b', '#7450a8 x'],
  ['#7450a8 x', '#fc180a b:#c9a0ac', '#fc180a b:#c9a0ac', '#f4493d', N],
  [O, `${N} q:#24b41c`, `${O} p:#a56118`, '#ea0d0b p:#fa7a22', O],
  [N, '#3fac23 q:#35d71c', `${U} x`, `${T} x`, `${T} s:#4ca2e6 x`],
  [`${O} p:#94500e`, `${N} q:#8a4b14`, `${U} x`, `${T} x`, '#c8741a'],
  ['#d18b1c p:#bd7410', '#21d10b', `${U} x`, `${U} x`, `${T} x`],
  ['#6899ec', '#a0b5e6 L', '#6899ec p:#657ba0', '#1560ff t:#9d6de8', '#a0b5e6 L'],
  ['#62a1ba L', '#b88ae4', '#b88ae4 p:#b265a8', '#8a04c6 h:#e982f0', '#bba9d0 L'],
  ['#862bbc t:#72309f', '#bba9d0 L', '#ed96e4', '#ed96e4 p:#e979ab', '#a98bb4 s:#eae222'],
  ['#e39ac7 L', '#e39ac7 L', '#9e9e9e', '#9e9e9e p:#9a7b5a', '#b5b5b5 L'],
  ['#126640 m:#43a09b', '#b5b5b5 L', '#a48ba0', '#a48ba0 x:#77657a', '#46a09c'],
  ['#46a09c p:#38806d', '#7fb2b0 L', '#6848b4 s:#4caba6', '#7fb2b0 L', '#8e8e8e'],
  ['#8e8e8e x:#5e5e5e', '#9b49c9', '#9b49c9 p:#922b88', '#a768a8 L', '#a768a8 L'],
  ['#9304ae m:#bb168e', '#d2488b', '#dc6ac1 L', '#b7b7b7 L', '#cbc8b2 L'],
  ['#383838', '#cacaca L', '#c9bfb8 L', '#c9bfb8 L', '#c9bfb8 L'],
  ['#c9bfb8 L', '#c9bfb8 L', `${G} f:#222`, `${G} s:#62d8a4`, `${G} s:#efef22`]
];

const dots = (c, step) => {
  let d = '';
  for (let y = 1, r = 0; y < 16; y += 4, r++)
    for (let x = step && r % 2 ? 3 : 1; x < 15; x += 4) d += `M${x} ${y}h2v2h-2z`;
  return `<path d="${d}" fill="${c}" shape-rendering="crispEdges"/>`;
};
const hatch = (c, back, dash) => {
  let d = '';
  for (let k = -16; k < 32; k += 8) d += back ? `M${k} 0l16 16` : `M${k} 16l16 -16`;
  return `<path d="${d}" stroke="${c}" stroke-width="${dash ? 0.9 : 1.2}"${dash ? ' stroke-dasharray="4 2"' : ''}/>`;
};
const draw = {
  d: c => dots(c, false),
  s: c => dots(c, true),
  b: c => hatch(c, true),
  f: c => hatch(c, false),
  p: c => hatch(c, true, true),
  q: c => hatch(c, false, true),
  o: c => `<path d="M1 1h14v14H1z" fill="none" stroke="${c}" stroke-width="2"/>`,
  x: c => `<path d="M.5 .5h15v15H.5zl15 15M15.500 .5l-15 15" fill="none" stroke="${c || '#193046'}"/>`,
  t: c => `<path d="M3 1h6v2H7v2H5V3H3zM11 1h5v3h-3zM0 7l3-2 3 3-3 3-3-1zM8 8l3-3 4 3-4 3zM4 15v-2h2v-2h3v2h2v2z" fill="${c}"/>`,
  h: c => `<path d="M2 1v6l3-3zM9 0v6L6 3zM11 3l4-3v6zM4 8l-3 3 3 3zM6 8l4 3-4 4zM14 8v7l-3-4z" fill="${c}"/>`,
  m: c => `<path d="M0 1h3v1h2v2H3v2H1V4H0zM7 0h2v2h3v2H9v2H7V4H6V2h1zM13 3h3v2h-2v2h-2V5h1zM2 8h3v2H3v2H1v-2h1zM7 7h3v2H8v2H6V9h1zM11 9h3v2h2v2h-3v-2h-2zM4 12h3v2h3v2H6v-2H4z" fill="${c}"/>`,
  L: (c, base) => `<path d="M1 16V6h2V2l2-2h6l2 2v4h2v10z" fill="#fff"/><path d="M6.500 4h3v3h-3z" fill="${base}"/><path d="M4 8V3.500L6 1h4l2 2.500V8" fill="none" stroke="#000" stroke-width="1.300"/><path d="M2 7.500h12V15.300H2z"/><path d="M6.500 9h3v2.500h-1V14h-1v-2.500h-1z" fill="${base}"/>`
};

document.getElementById('palette').innerHTML = rows.flat().map(spec => {
  const [base, ...layers] = spec.split(' ');
  const body = layers.map(l => { const [k, c] = l.split(':'); return draw[k](c, base); }).join('');
  return `<div class="cell"><svg width="16" height="16"><path d="M0 0h16v16H0z" fill="${base}"/>${body}</svg></div>`;
}).join('');
```
